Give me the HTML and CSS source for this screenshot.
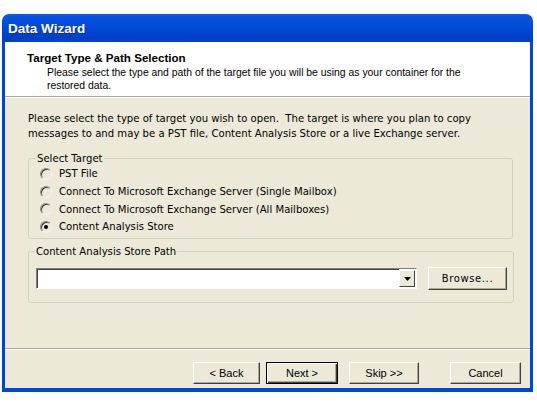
FILE: index.html
```html
<!DOCTYPE html>
<html lang="en">
    <head>
        <meta charset="UTF-8">
        <title>Data Wizard</title>
        <link rel="stylesheet" href="styles.css">
    </head>

    <body>
        <div class="window">
            <div class="titlebar">Data Wizard</div>

            <div class="frame">
                <div class="header">
                    <h1>Target Type &amp; Path Selection</h1>
                    <p>Please select the type and path of the target file you will be using as your container for the restored data.</p>
                </div>

                <div class="content">
                    <p class="intro">Please select the type of target you wish to open.&nbsp; The target is where you plan to copy messages to and may be a PST file, Content Analysis Store or a live Exchange server.</p>

                    <fieldset class="group targets">
                        <legend>Select Target</legend>
                        <label class="radio"><span class="dot"></span>PST File</label>
                        <label class="radio"><span class="dot"></span>Connect To Microsoft Exchange Server (Single Mailbox)</label>
                        <label class="radio"><span class="dot"></span>Connect To Microsoft Exchange Server (All Mailboxes)</label>
                        <label class="radio checked"><span class="dot"></span>Content Analysis Store</label>
                    </fieldset>

                    <fieldset class="group path">
                        <legend>Content Analysis Store Path</legend>
                        <div class="path-row">
                            <div class="combo">
                                <div class="combo-text"></div>
                                <div class="combo-arrow">
                                    <svg width="7" height="4" viewBox="0 0 7 4"><path d="M0 0h7L3.5 4z" fill="#000"/></svg>
                                </div>
                            </div>
                            <button class="btn browse">Browse...</button>
                        </div>
                    </fieldset>
                </div>

                <div class="footer">
                    <button class="btn nav">&lt; Back</button>
                    <button class="btn nav default">Next &gt;</button>
                    <button class="btn nav skip">Skip &gt;&gt;</button>
                    <button class="btn nav cancel">Cancel</button>
                </div>
            </div>
        </div>
    </body>
</html>
```

FILE: styles.css
```css
body {
    margin: 0;
    background: #fff;
    font-family: "DejaVu Sans", Verdana, sans-serif;
}

.window {
    margin: 14px 0 0 2px;
    width: 531px;
    height: 378px;
    display: flex;
    flex-direction: column;
}

.titlebar {
    height: 28px;
    line-height: 29px;
    padding-left: 6px;
    border-radius: 7px 7px 0 0;
    background: linear-gradient(#0a5fe6 0%, #0853e0 10%, #0049d6 50%, #003fc6 85%, #0043cf 100%);
    color: #fff;
    font-family: "Liberation Sans", Arial, sans-serif;
    font-weight: bold;
    font-size: 13.5px;
    text-shadow: 1px 1px 0 #0a2f8a;
}

.frame {
    flex: 1;
    display: flex;
    flex-direction: column;
    border: 3px solid #0047d3;
    border-top: 0;
    border-bottom-width: 4px;
    background: #ece9d8;
}

.header {
    height: 55px;
    flex: none;
    background: #fff;
    border-bottom: 1px solid #aca899;
    box-shadow: 0 1px 0 #fff;
    padding: 9px 0 0 22px;
    box-sizing: border-box;
    font-family: "Liberation Sans", Arial, sans-serif;
}

.header h1 {
    margin: 0;
    font-size: 11.6px;
    font-weight: bold;
}

.header p {
    margin: 2px 40px 0 20px;
    font-size: 10.4px;
    line-height: 13px;
}

.content {
    flex: 1;
    padding: 14px 17px 0 23px;
    font-size: 10.1px;
}

.intro {
    margin: 0 0 12px 0;
    line-height: 15px;
}

.group {
    margin: 0;
    border: 1px solid #d0d0bf;
    border-radius: 3px;
    padding: 0 0 0 11px;
}

.group legend {
    padding: 0 1px;
    margin-left: -4px;
}

.targets {
    height: 86px;
    box-sizing: border-box;
    padding-top: 1px;
}

.radio {
    display: flex;
    align-items: center;
    height: 17.7px;
}

.dot {
    width: 12px;
    height: 12px;
    margin-right: 7px;
    border-radius: 50%;
    border: 1px solid;
    border-color: #8a8a8a #f4f3ee #f4f3ee #8a8a8a;
    box-shadow: inset 1px 1px 0 #404040;
    box-sizing: border-box;
    position: relative;
}

.checked .dot::after {
    content: "";
    position: absolute;
    left: 3px;
    top: 3px;
    width: 4px;
    height: 4px;
    border-radius: 50%;
    background: #000;
}

.path {
    margin-top: 7px;
    height: 57px;
    box-sizing: border-box;
    padding: 0 6px 0 7px;
}

.path legend {
    margin-left: -1px;
}

.path-row {
    display: flex;
    align-items: center;
    margin-top: 10px;
}

.combo {
    width: 381px;
    height: 21px;
    display: flex;
    background: #fff;
    border: 1px solid;
    border-color: #808080 #fff #fff #808080;
    box-sizing: border-box;
}

.combo-text {
    flex: 1;
    border-top: 1px solid #404040;
    border-left: 1px solid #404040;
}

.combo-arrow {
    width: 16px;
    display: flex;
    align-items: center;
    justify-content: center;
    background: #ece9d8;
    border: 1px solid;
    border-color: #fff #404040 #404040 #fff;
    box-sizing: border-box;
    margin: 1px 1px 1px 0;
}

.btn {
    height: 23px;
    background: #ece9d8;
    border: 1px solid;
    border-color: #fff #404040 #404040 #fff;
    box-shadow: inset -1px -1px 0 #aca899;
    font-family: "DejaVu Sans", sans-serif;
    font-size: 10px;
    color: #000;
    padding: 0;
}

.browse {
    margin-left: 11px;
    width: 79px;
    letter-spacing: 0.6px;
}

.footer {
    height: 40px;
    flex: none;
    box-sizing: border-box;
    border-top: 1px solid #aca899;
    box-shadow: inset 0 1px 0 #fff;
    display: flex;
    align-items: flex-start;
    padding: 13px 0 0 188px;
}

.nav {
    width: 67px;
    height: 22px;
    font-family: "Liberation Sans", Arial, sans-serif;
    font-size: 11px;
    margin-right: 6px;
}

.default {
    width: 72px;
    border: 1px solid #000;
    box-shadow: inset 1px 1px 0 #fff, inset -1px -1px 0 #404040, inset -2px -2px 0 #aca899;
    margin-right: 11px;
}

.skip {
    width: 70px;
    margin-right: 31px;
}

.cancel {
    width: 71px;
}
```
